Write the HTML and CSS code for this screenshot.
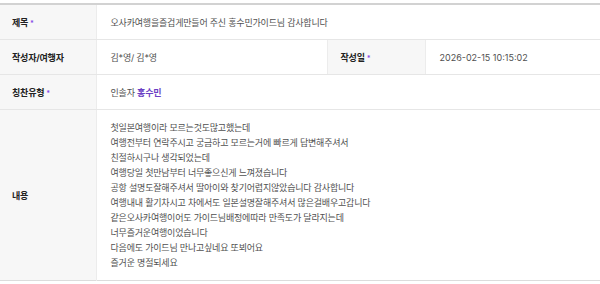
FILE: index.html
```html
<!DOCTYPE html>
<html lang="ko">
<head>
    <meta charset="UTF-8">
    <meta name="viewport" content="width=device-width, initial-scale=1.0">
    <title>칭찬합시다</title>
    <link rel="stylesheet" href="styles.css">
</head>
<body>
    <div class="board-view">
        <table class="view-table">
            <colgroup>
                <col class="col-label">
                <col class="col-value">
                <col class="col-label2">
                <col>
            </colgroup>
            <tr class="row">
                <th>제목 <span class="req">*</span></th>
                <td colspan="3" class="ko">오사카여행을즐겁게만들어 주신 홍수민가이드님 감사합니다</td>
            </tr>
            <tr class="row">
                <th>작성자/여행자</th>
                <td class="ko">김*영/ 김*영</td>
                <th class="th-mid">작성일 <span class="req">*</span></th>
                <td class="date">2026-02-15 10:15:02</td>
            </tr>
            <tr class="row">
                <th>칭찬유형 <span class="req">*</span></th>
                <td colspan="3" class="ko">인솔자 <strong class="guide">홍수민</strong></td>
            </tr>
            <tr class="row-content">
                <th>내용</th>
                <td colspan="3" class="ko content">
                    첫일본여행이라 모르는것도많고했는데<br>
                    여행전부터 연락주시고 궁금하고 모르는거에 빠르게 답변해주셔서<br>
                    친절하시구나 생각되었는데<br>
                    여행당일 첫만남부터 너무좋으신게 느껴졌습니다<br>
                    공항 설명도잘해주셔서 딸아이와 찾기어렵지않았습니다 감사합니다<br>
                    여행내내 활기차시고 차에서도 일본설명잘해주셔서 많은걸배우고갑니다<br>
                    같은오사카여행이어도 가이드님배정에따라 만족도가 달라지는데<br>
                    너무즐거운여행이었습니다<br>
                    다음에도 가이드님 만나고싶네요 또뵈어요<br>
                    즐거운 명절되세요
                </td>
            </tr>
        </table>
    </div>
</body>
</html>
```

FILE: styles.css
```css
body {
    margin: 0;
    background: #ffffff;
    font-family: 'Inter', 'Noto Sans CJK KR', sans-serif;
    font-size: 9px;
    color: #505050;
}

.board-view {
    padding-top: 3px;
}

.view-table {
    width: 600px;
    border-collapse: collapse;
    table-layout: fixed;
    border-top: 2px solid #d2d2d2;
    border-bottom: 1px solid #dcdcdc;
}

.col-label {
    width: 96px;
}

.col-value {
    width: 231px;
}

.col-label2 {
    width: 98px;
}

.view-table th {
    background: #f7f7f7;
    color: #222222;
    font-weight: bold;
    text-align: left;
    padding: 0 0 0 12px;
    letter-spacing: -0.2px;
    border-right: 1px solid #ececec;
}

.view-table th.th-mid {
    padding-left: 13px;
    border-left: 1px solid #ececec;
}

.view-table td {
    padding: 0 0 0 14px;
}

.row th,
.row td {
    height: 34px;
    border-bottom: 1px solid #e6e6e6;
}

.ko {
    letter-spacing: -0.2px;
}

.date {
    letter-spacing: 0;
}

.req {
    color: #8a4de8;
    font-size: 7px;
}

.guide {
    color: #6b3fc4;
    font-weight: bold;
}

.row-content th,
.row-content td {
    height: 170px;
}

.view-table td.content {
    line-height: 15px;
}
```
